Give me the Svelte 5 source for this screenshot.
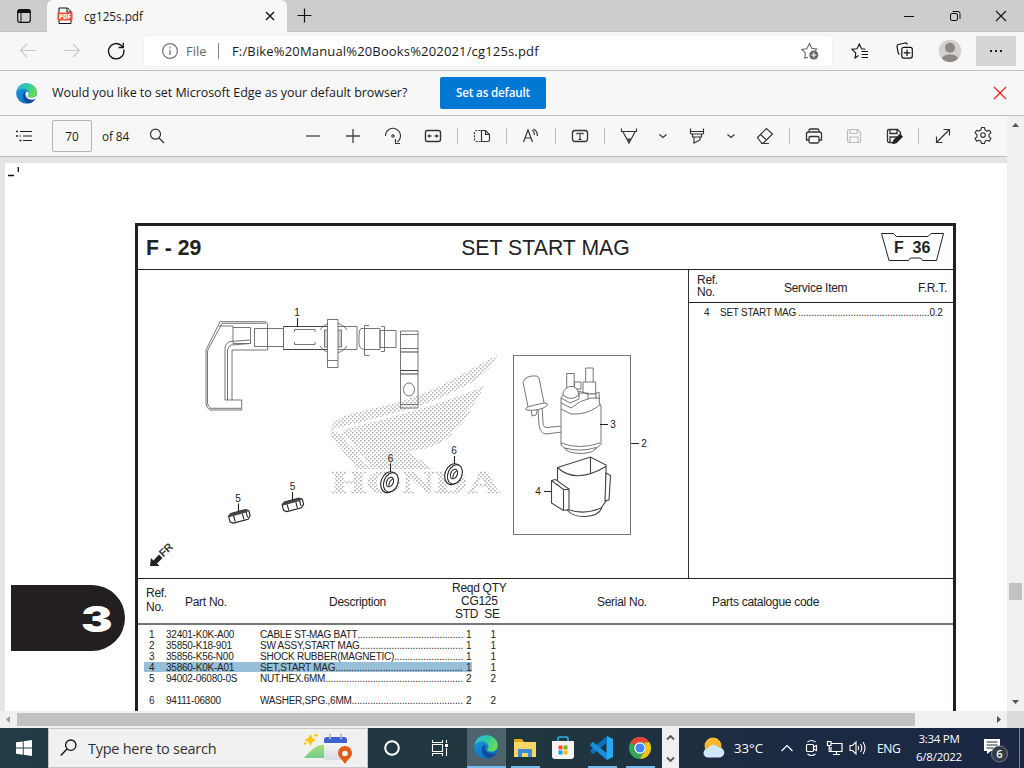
<script>
  const items = [
    ['1', '32401-K0K-A00', 'CABLE ST-MAG BATT', 40, '1', '1'],
    ['2', '35850-K18-901', 'SW ASSY,START MAG', 39, '1', '1'],
    ['3', '35856-K56-N00', 'SHOCK RUBBER(MAGNETIC)', 26, '1', '1'],
    ['4', '35860-K0K-A01', 'SET,START MAG', 48, '1', '1'],
    ['5', '94002-06080-0S', 'NUT.HEX.6MM', 52, '2', '2'],
    null,
    ['6', '94111-06800', 'WASHER,SPG.,6MM', 42, '2', '2']
  ];
  const nuts = [[239, 516.5], [292.5, 505]];
  const washers = [[390, 482], [454, 474]];
</script>

{#snippet edge(size, id)}
  <svg width={size} height={size} viewBox="0 0 24 24">
    <defs>
      <linearGradient id={id + 'a'} x1="0" y1="0" x2="1" y2="0.5"><stop offset="0" stop-color="#28b5e4" /><stop offset="0.55" stop-color="#36c9a0" /><stop offset="1" stop-color="#65dc59" /></linearGradient>
      <linearGradient id={id + 'b'} x1="0" y1="0" x2="0.7" y2="1"><stop offset="0" stop-color="#1b9de2" /><stop offset="1" stop-color="#0b6bc4" /></linearGradient>
    </defs>
    <circle cx="12" cy="12" r="11.8" fill="url(#{id}b)" />
    <path d="M.6 10C1.5 3.6 6.2.2 12 .2c7 0 11.8 4.900 11.800 10.200 0 3.800-2.900 6.200-6.400 6.200-2.600 0-4.200-.8-4.200-1.600 0-.7 1.300-1.300 1.300-3.300 0-2.900-2.800-5.200-6.300-5.200C5 6.500 2.100 7.800.6 10z" fill="url(#{id}a)" />
    <path d="M8.200 12.500c-1.800 5.300 2.400 10.600 7.600 10.600 3-.8 5.200-2.600 6.700-5.100-5.500 2.400-12.200-.2-11.700-5.900.1-1 .7-1.800 1.400-2.200-1.800-.2-3.300.8-4 2.600z" fill="#134a94" />
    <path d="M14.500 11.700c0 2-1.300 2.600-1.300 3.300 0 .8 1.600 1.600 4.200 1.600 2.300 0 4.600-1 5.800-3l-.6 4.300c-5.400 3-12.400.2-11.800-5.800.1-1 .7-1.800 1.400-2.200 1.200 0 2.200.6 2.300 1.800z" fill="#f7f7f7" opacity={size < 22 ? 1 : 0} />
  </svg>
{/snippet}

<div class="screen">
  <header class="tabs">
    <div class="tab-actions">
      <svg width="16" height="16" viewBox="0 0 16 16"><rect x="1.700" y="1.700" width="12.600" height="12.600" rx="2" fill="none" stroke="#111" stroke-width="1.200" /><path d="M1.500 5V3.500a2 2 0 0 1 2-2h9a2 2 0 0 1 2 2V5z" fill="#111" /><path d="M5 5v9" stroke="#111" /></svg>
    </div>
    <div class="tab">
      <svg width="16" height="18" viewBox="0 0 16 18"><path d="M2 1h8.500L14 4.500V16.500H2z" fill="#fff" stroke="#111" /><path d="M10 1v4h4" fill="none" stroke="#111" /><rect x=".5" y="5.500" width="15" height="8" fill="#f44" /><text x="8" y="12" text-anchor="middle" font-size="6.500" font-weight="800" fill="#fff" textLength="12" lengthAdjust="spacingAndGlyphs">PDF</text></svg>
      <span class="tab-title">cg125s.pdf</span>
      <svg class="tab-close" width="10" height="10" viewBox="0 0 10 10"><path d="M1 1l8 8M9 1L1 9" stroke="#111" stroke-width="1.400" /></svg>
    </div>
    <svg class="new-tab" width="15" height="15" viewBox="0 0 15 15"><path d="M7.500.5v14M.5 7.500h14" stroke="#111" stroke-width="1.200" /></svg>
    <div class="window-controls">
      <svg width="46" height="31" viewBox="0 0 46 31"><path d="M18 16.500h10" stroke="#111" /></svg>
      <svg width="46" height="31" viewBox="0 0 46 31" fill="none" stroke="#111"><rect x="18.500" y="13.500" width="7" height="7" rx="1.500" /><path d="M20.500 11.500h5.500a2 2 0 0 1 2 2V19" /></svg>
      <svg width="46" height="31" viewBox="0 0 46 31"><path d="M18 11l10 10M28 11L18 21" stroke="#111" stroke-width="1.100" /></svg>
    </div>
  </header>

  <nav class="address">
    <svg class="back" width="18" height="16" viewBox="0 0 18 16"><path d="M8 1L1.500 7.500 8 14M1.500 7.500H17" fill="none" stroke="#c9c9c9" stroke-width="1.100" /></svg>
    <svg class="forward" width="18" height="16" viewBox="0 0 18 16"><path d="M10 1l6.500 6.500L10 14M16.500 7.500H1" fill="none" stroke="#c9c9c9" stroke-width="1.100" /></svg>
    <svg class="reload" width="18" height="18" viewBox="0 0 18 18"><path d="M16.700 7.500A7.700 7.700 0 1 1 14 3.200l2 2M16.300.8v4.700h-4.700" fill="none" stroke="#111" stroke-width="1.300" /></svg>
    <div class="url">
      <svg width="16" height="16" viewBox="0 0 16 16"><circle cx="8" cy="8" r="7.400" fill="none" stroke="#777" stroke-width="1.200" /><path d="M8 7v5M8 4v1.500" stroke="#777" stroke-width="1.300" /></svg>
      <span class="scheme">File</span><i></i><span class="path">F:/Bike%20Manual%20Books%202021/cg125s.pdf</span>
      <svg class="fav" width="18" height="18" viewBox="0 0 18 18"><path d="M7 15.200l-3.200 1 .6-5L1 7.500l4.800-.8L8.500 1.500l2.300 4.800 5 .9-1.500 1.500" fill="none" stroke="#666" stroke-width="1.100" /><circle cx="12.800" cy="13" r="4.500" fill="#666" /><path d="M10.300 13h5M12.800 10.500v5" stroke="#fff" stroke-width="1.100" /></svg>
    </div>
    <svg class="a-star" width="18" height="17" viewBox="0 0 18 17"><path d="M7.500 12.500L4 15l.8-5L1 6.300l5-.6L8.300 1l2.200 4.700 4 .6M10.500 8.500H17M10.500 11.500H17M10.500 14.500H17" fill="none" stroke="#111" stroke-width="1.100" /></svg>
    <svg class="a-coll" width="18" height="18" viewBox="0 0 18 18" fill="none" stroke="#111" stroke-width="1.200"><path d="M3.500 12.500C1.500 11.500 2 9.500 1.500 7L1 4.500a2 2 0 0 1 1.500-2L9 1a2 2 0 0 1 2.300 1.500" /><rect x="5.800" y="5.300" width="10.500" height="10.800" rx="2" /><path d="M11 7.500v6.500M7.800 10.800h6.500" /></svg>
    <svg class="a-user" width="24" height="24" viewBox="0 0 24 24"><circle cx="12" cy="12" r="11.300" fill="#d3d1cf" /><circle cx="12" cy="8.800" r="5" fill="#8d8885" /><path d="M4 19.500C5 14 19 14 20 19.500a11 11 0 0 1-16 0z" fill="#8d8885" /></svg>
    <div class="more"><b></b><b></b><b></b></div>
  </nav>

  <section class="banner">
    {@render edge(21, 'small')}
    <span class="ask">Would you like to set Microsoft Edge as your default browser?</span>
    <button>Set as default</button>
    <svg class="dismiss" width="14" height="14" viewBox="0 0 14 14"><path d="M1 1l12 12M13 1L1 13" stroke="#f01818" stroke-width="1.100" /></svg>
  </section>

  <div class="work">
    <div class="viewer">
      <div class="toolbar">
        <svg class="toc" width="18" height="14" viewBox="0 0 18 14"><path d="M5 2.500h12M8 7h9M8 11.500h9" stroke="#222" stroke-width="1.200" /><path d="M1 2.500h2M1 7h2M4.500 7h1M4.500 11.500h2" stroke="#222" stroke-width="1.600" /></svg>
        <div class="page-input">70</div>
        <span class="of">of 84</span>
        <svg class="find" width="16" height="16" viewBox="0 0 16 16"><circle cx="6.500" cy="6.200" r="5" fill="none" stroke="#333" stroke-width="1.200" /><path d="M10 10l5 5" stroke="#333" stroke-width="1.300" /></svg>
        <div class="tools">
          <svg viewBox="0 0 40 40"><path d="M13 20h14" stroke="#444" stroke-width="1.300" /></svg>
          <svg viewBox="0 0 40 40"><path d="M13 20h14M20 13v14" stroke="#444" stroke-width="1.300" /></svg>
          <svg viewBox="0 0 40 40"><path d="M12.500 20a7.500 7.500 0 1 1 11.800 6M27 27.500h-4.500V23" /><circle cx="20" cy="20" r="1.200" /></svg>
          <svg viewBox="0 0 40 40"><rect x="12.500" y="14.500" width="15" height="11" rx="2" stroke-width="1.400" /><path d="M14.800 20h4M21.200 20h4" /><path d="M14.500 20l2.500-2v4zM25.500 20L23 18v4z" fill="#333" stroke="none" /></svg>
          <i></i>
          <svg viewBox="0 0 40 40"><path d="M18.500 14.500h-4a2 2 0 0 0-2 2v7a2 2 0 0 0 2 2h4" stroke-dasharray="2 1.200" /><path d="M19.500 14.500h4l4 4v5.500a1.500 1.500 0 0 1-1.500 1.500h-6.500zM23.500 14.500v4h4" /></svg>
          <i></i>
          <svg viewBox="0 0 40 40"><path d="M12.500 26l4.500-12 4.500 12M14 22h6M21 14c2 1 2.500 3 2.200 5M22.500 13c3 1.500 4 4 3.800 7" /></svg>
          <i></i>
          <svg viewBox="0 0 40 40"><rect x="12.500" y="14.500" width="15" height="11" rx="2.500" stroke-width="1.300" /><path d="M17 18.500v-1.300h6v1.300M20 17v6.500M18.500 23.500h3" /></svg>
          <i></i>
          <svg viewBox="0 0 40 40"><path d="M12.500 12.500v3h15v-3M14 16l6 11 6-11" /><path d="M17.500 22.500h5L20 27.500z" fill="#444" stroke="none" /></svg>
          <svg class="chev" viewBox="0 0 28 40"><path d="M10.500 18.500l3.500 3 3.500-3" /></svg>
          <svg viewBox="0 0 40 40"><path d="M13.500 12.500V17a1 1 0 0 0 1 1h11a1 1 0 0 0 1-1v-4.500M13.500 15.500h13M15.500 18v3h9V18M17 21v6l6-3V21" /></svg>
          <svg class="chev" viewBox="0 0 28 40"><path d="M10.500 18.500l3.500 3 3.500-3" /></svg>
          <svg viewBox="0 0 40 40"><path d="M12.500 21.500l9-9 6 5.500-9 9h-2zM15.500 18.500l6 5.500M16 27.500h8" /></svg>
          <i></i>
          <svg viewBox="0 0 40 40"><path d="M15 16v-1.500a1.500 1.500 0 0 1 1.500-1.500h7a1.500 1.500 0 0 1 1.500 1.500V16M15 24h-2.500v-6a2 2 0 0 1 2-2h11a2 2 0 0 1 2 2v6H25" stroke-width="1.300" /><rect x="15" y="20.500" width="10" height="6.500" rx="1.500" stroke-width="1.300" /></svg>
          <svg class="off" viewBox="0 0 40 40"><path d="M15 13.500h8.500l3 3V25a1.500 1.500 0 0 1-1.500 1.500H15a1.500 1.500 0 0 1-1.500-1.500V15a1.500 1.500 0 0 1 1.500-1.500zM16 13.500v4h7v-4M16 26.500V21h8v5.500" /></svg>
          <svg viewBox="0 0 40 40"><path d="M19 26.500h-4a1.500 1.500 0 0 1-1.500-1.500V15a1.500 1.500 0 0 1 1.500-1.500h8.500l3 3V19M16 13.500v4h7v-4M16 26.500V21h7" stroke-width="1.300" /><path d="M19 27.500l1-3.500 6-5.500 2.200 2.200-6 6z" fill="#222" stroke="#222" /></svg>
          <i></i>
          <svg viewBox="0 0 40 40"><path d="M13.500 26.500l13-13M20.500 13.500h6v6M13.500 20.500v6h6" /></svg>
          <svg viewBox="0 0 40 40"><circle cx="20" cy="19" r="2.300" /><path d="M18.500 11.500h3l.6 2.600 1.700 1 2.600-.8 1.500 2.600-1.900 1.800v2l1.900 1.800-1.500 2.600-2.600-.8-1.700 1-.6 2.200h-3l-.6-2.200-1.700-1-2.600.8-1.500-2.600 1.900-1.800v-2l-1.900-1.800 1.500-2.600 2.600.8 1.700-1z" stroke-linejoin="round" /></svg>
        </div>
      </div>

      <div class="canvas">
        <div class="page">
          <svg class="crop" width="14" height="16" viewBox="0 0 14 16"><path d="M3 12.500h6M13.300 4v5" stroke="#111" stroke-width="1.300" /></svg>
          <div class="chapter"><span>3</span></div>
          <div class="sheet">
            <div class="sheet-head">
              <strong>F - 29</strong>
              <span class="name">SET START MAG</span>
              <svg width="64" height="30" viewBox="881 233 64 30"><path d="M881.500 233.500h12l3 3h31.500l3-3h12.500l-7 27h-14l-2-2.500h-10l-2 2.500h-19.500z" fill="#fff" stroke="#222" /><text x="894" y="253" font-family="Liberation Sans, sans-serif" font-weight="700" font-size="16" fill="#222">F</text><text x="912.500" y="253" font-family="Liberation Sans, sans-serif" font-weight="700" font-size="16" fill="#222">36</text></svg>
            </div>
            <div class="figure-row">
              <svg class="figure" width="550" height="308" viewBox="138 270 550 308" fill="none" stroke="#666" stroke-width=".9">
                <defs><pattern id="dots" width="4" height="4" patternUnits="userSpaceOnUse"><path d="M0 0h1.600v1.600H0zM2 2h1.600v1.600H2z" fill="#b4b4b4" stroke="none" /></pattern></defs>
                <g fill="url(#dots)" stroke="none">
                  <path d="M497.500 355L440 386c-30 14-52 19-82 26-17 4-27 9-27 18l14-4c45-11 80-20 108-34 24-11 38-22 44.500-37z" />
                  <path d="M484 386c-44 19-94 32-139 43l-4 5 9 11c40-9 80-15 105-26 14-7 23-18 29-33z" />
                  <path d="M471 411c-41 15-81 23-121 35l9 11c34-9 66-13 88-22 12-7 19-15 24-24z" />
                  <path d="M453 433c-33 9-60 15-93 25l8 11h65l-26-18c18 0 38-8 46-18z" />
                  <path d="M331 429l10 6 27 34h-11l-26-32z" />
                  <text x="331" y="493" font-family="Liberation Serif, serif" font-weight="700" font-size="30.500" textLength="169" lengthAdjust="spacingAndGlyphs" stroke="url(#dots)" stroke-width="1">HONDA</text>
                </g>
                <path d="M343 433l28 36" stroke="#fff" stroke-width="2" />
                <g fill="none">
                  <path d="M220 321.700h46l1.500 2V350H232v50h9.700v10H210q-4-2-4-7v-53l14-28.300" />
                  <path d="M222 323.300h44M241 408.300h-31M222 323.500l-14.500 27V403q.5 4 3 5M219 326h14v17.500h17.500v-16H233M225 400v-52q1-6 6-6.500l19-1.500M227.500 400v-50q1-4.500 4-5l19-1.500M225 400h7" />
                  <path d="M254.500 328.500h29v18h-29zM283.500 326.500H357v23h-73.500z" /><path d="M294.500 332v-2.500H315v2.500M294.500 342v2.500H315v-2.500" />
                  <path d="M283.500 326.500h44M283.500 349.500h44" stroke="#444" stroke-width="1.200" />
                  <path d="M320 330a16 16 0 0 1 27 0M320 346a16 16 0 0 0 27 0" /><path d="M324.500 330h4v17h-4zM337.500 330h4v17h-4z" fill="#aaa" fill-opacity=".5" />
                  <path d="M327.500 319.500h10.500v48h-10.500zM327.500 360.500h10.500" fill="#fff" />
                  <path d="M361 328.500h19v21h-16q-5-1-5-6v-9q0-4 2-6zM369 325.500h-4.500v30h5M380 330.500h16v17h-16zM381 326.500h3.500v25H381" />
                  <path d="M400.500 331h17.500v77h-17.500zM400.500 334.500H418M400.500 348.500H418M400.500 404.500H418" /><path d="M400.500 352H418M400.500 370.500H418M400.500 374H418" stroke="#444" stroke-width="1.200" /><ellipse cx="409" cy="389.500" rx="5.500" ry="6.500" />
                </g>
                <rect x="513.500" y="355.500" width="117" height="179" />
                <g fill="#fff" stroke="#666">
                  <path d="M538 408l1 17q1 8 7 9l16-2v-6l-15 1.500q-4 0-4-5l-1-17" /><path d="M531 407l1 9 4-1 2-8" />
                  <path d="M523 382q3-7 14-6l2 2 5.500 27q-5 4-16 4z" /><path d="M526 410q-1-3 5-4l13-3q4 0 3.500 2-2 3-9 4.500t-12.500.5z" />
                  <path d="M566.700 373.500h7.500V388h-7.500zM585.700 368h7.500v16h-7.500zM574.500 382h6.500v7h-6.500z" />
                  <path d="M583 382h12.700v12H583z" />
                  <path d="M561 445v-47l3-4h9l6-3 8 3h8l4-2 .5 12 1.500 2v38l-4 4q-16 7-33 0z" />
                  <path d="M563 395q0-7 7-8.500t9 8.500q-8 7-16 0z" /><path d="M561 409l10 5q15 1 26-7l4-3M561 403l10 5q9-8 20-10h9M561 398l9 5 9-4V393h9v6M596 393v6" fill="none" />
                  <path d="M561 443q18 7 39 0" fill="none" /><path d="M565 448q1 5 16 5.500 14-.5 15-6-16 5-31 .5z" />
                </g>
                <g fill="#fff" stroke="#444" stroke-width="1.100">
                  <path d="M567 510q6 7 18 6.500 14-.5 17-9" />
                  <path d="M557.500 467.500l33-10.500 15.500 8v36l-5 7q-16 7-32 2l-11.500-10z" />
                  <path d="M557.500 467.500q18 17 48.500-1M590.500 457v17" fill="none" />
                  <path d="M551.500 480.500l4-1 13.500 9.500v20.500l-5.500 1-12-7.500zM563.500 489.500v20.500M552 481l11.500 8.500h5" />
                  <path d="M606 473l4.500 2.500L609 500l-4 .5z" />
                </g>
                <g stroke="#222" stroke-width="1.100">
                  {#each nuts as [x, y]}
                    <g transform="translate({x} {y}) rotate(-15)"><path d="M-10-3l3-2H8l3 2v5l-3 3H-7l-3-2z" fill="#fff" /><path d="M-5-2v6M4-2v6M8-3v6" /><path d="M-10-2.500l3-2.500H8l3 2-3 1H-9z" fill="#444" stroke="none" /></g>
                  {/each}
                  {#each washers as [x, y]}
                    <g transform="translate({x} {y}) rotate(22)"><ellipse rx="8" ry="10.800" cx="-.8" cy=".5" fill="#fff" /><ellipse rx="7" ry="10" cx="1" fill="#fff" /><ellipse rx="3.300" ry="5" /><path d="M1.500-4q-3 4-1 8" /></g>
                  {/each}
                  <path d="M297.500 318v8.500M238.500 503.500v8M292.500 492v8M390.500 463.500v8M454.500 456v8M600 424.500h8M631 443.500h8M544 491.500h8" />
                </g>
                <g font-family="Liberation Sans, sans-serif" font-size="10" fill="#222" stroke="none" text-anchor="middle">
                  <text x="297" y="316">1</text><text x="238" y="502">5</text><text x="292.500" y="490">5</text><text x="390.500" y="462">6</text><text x="454" y="454">6</text><text x="613" y="428">3</text><text x="644" y="447">2</text><text x="538" y="495">4</text>
                  <text font-size="10.500" transform="translate(167 551) rotate(-43)" y="2" stroke="#222" stroke-width=".3">FR</text>
                </g>
                <path d="M150 566l1-8 2.500 2.500 5.500-6 3.500 3.500-5.500 5.500 2.500 2.500z" fill="#222" stroke="none" />
              </svg>
              <div class="service">
                <div class="service-head"><span class="ref">Ref.<br />No.</span><span>Service Item</span><span>F.R.T.</span></div>
                <div class="service-item"><span>4</span><span>SET START MAG</span><span>{'.'.repeat(50)}</span><span>0.2</span></div>
              </div>
            </div>
            <div class="parts-head">
              <span class="ref">Ref.<br />No.</span><span class="h-part">Part No.</span><span class="h-desc">Description</span>
              <span class="h-qty"><span>Reqd QTY</span><span class="cg">CG125</span><span class="std">STD&nbsp; SE</span></span>
              <span class="h-ser">Serial No.</span><span class="h-cat">Parts catalogue code</span>
            </div>
            <div class="parts">
              {#each items as it}
                {#if it}
                  <div class="part">
                    <div class="part-main" class:selected={it[0] === '4'}><span>{it[0]}</span><span>{it[1]}</span><span class="desc">{it[2]}<span class="dots">{'.'.repeat(it[3])}</span></span><span class="q">{it[4]}</span></div>
                    <span class="se">{it[5]}</span>
                  </div>
                {:else}<div class="part"></div>{/if}
              {/each}
            </div>
          </div>
        </div>
      </div>
    </div>
    <div class="vscroll"><svg width="17" height="17" viewBox="0 0 17 17"><path d="M5 11l3.500-4 3.500 4z" fill="#555" /></svg><div class="vthumb"></div><svg class="down" width="17" height="17" viewBox="0 0 17 17"><path d="M5 6l3.500 4L12 6z" fill="#555" /></svg></div>
  </div>
  <div class="hscroll"><svg width="17" height="17" viewBox="0 0 17 17"><path d="M10 5L6 8.500l4 3.500z" fill="#999" /></svg><div class="hthumb"></div><svg class="hright" width="17" height="17" viewBox="0 0 17 17"><path d="M7 5l4 3.500L7 12z" fill="#555" /></svg><div class="corner"></div></div>

  <footer class="taskbar">
    <div class="start"><svg width="16" height="16" viewBox="0 0 16 16"><path d="M0 2.300L6.800 1.400v6.200H0zM7.700 1.200L16 0v7.600H7.700zM0 8.500h6.800v6.200L0 13.800zM7.700 8.500H16V16l-8.300-1.200z" fill="#fff" /></svg></div>
    <div class="search">
      <svg width="17" height="18" viewBox="0 0 17 18"><circle cx="10.800" cy="6.200" r="5.200" fill="none" stroke="#111" stroke-width="1.300" /><path d="M7 10L.8 16.500" stroke="#111" stroke-width="1.300" /></svg>
      <span>Type here to search</span>
      <svg width="50" height="32" viewBox="303 732 50 32">
        <defs><linearGradient id="hill" x1="0" y1="0" x2="0" y2="1"><stop offset="0" stop-color="#a6dd70" /><stop offset="1" stop-color="#71cd91" /></linearGradient><linearGradient id="cal" x1="0" y1="0" x2="0" y2="1"><stop offset="0" stop-color="#fff" /><stop offset="1" stop-color="#d8dadd" /></linearGradient></defs>
        <path d="M304 758q12-15 21-13v13z" fill="url(#hill)" /><rect x="324" y="737" width="23" height="23" rx="3" fill="url(#cal)" /><path d="M324 743v-3q0-3 3-3h17q3 0 3 3v3z" fill="#3d62d1" /><path d="M330 734.500v4M341 734.500v4" stroke="#b7bac1" stroke-width="1.800" stroke-linecap="round" />
        <path d="M310.500 734l2 4 3.500 2-3.500 2-2 4-2-4-4-2 4-2zM316 733l.8 1.600 1.600.8-1.600.8-.8 1.600-.8-1.600-1.600-.8 1.600-.8zM305 741.500l.7 1.300 1.300.7-1.300.7-.7 1.300-.7-1.300-1.300-.7 1.300-.7z" fill="#fdc60b" />
        <path d="M345 764c-3-5-7-7-7-11a7 7 0 0 1 14 0c0 4-4 6-7 11z" fill="#e25a13" /><circle cx="345" cy="753.500" r="2.800" fill="#fff" />
      </svg>
    </div>
    <div class="sys"><svg width="18" height="18" viewBox="0 0 18 18"><circle cx="9" cy="9" r="6.800" fill="none" stroke="#fff" stroke-width="2" /></svg></div>
    <div class="sys"><svg width="18" height="18" viewBox="0 0 18 18" fill="none" stroke="#fff" stroke-width="1.100"><path d="M1.500 1v2.500h10V1M1.500 17v-2.500h10V17M1.500 5.500h10v7h-10zM15.500 1v3M15.500 9v8" /><path d="M15.500 5v3" stroke-width="3" /></svg></div>
    <div class="apps">
      <div class="app active">{@render edge(24, 'large')}</div>
      <div class="app run"><svg width="24" height="24" viewBox="0 0 24 24"><path d="M1 3h8l2 3h12v15H1z" fill="#e9a80e" /><path d="M1 6h22v15H1z" fill="#ffd667" /><path d="M5 21v-8h14v8h-4v-4H9v4z" fill="#3c8dd8" /></svg></div>
      <div class="app"><svg width="24" height="24" viewBox="0 0 24 24"><path d="M7 5V2.500Q7 1 8.500 1h7Q17 1 17 2.500V5" fill="none" stroke="#2bb4e8" stroke-width="1.600" /><path d="M1 5h22v15q0 3-3 3H4q-3 0-3-3z" fill="#f3f3f3" /><path d="M7.500 9.500h4v4h-4z" fill="#f25022" /><path d="M12.500 9.500h4v4h-4z" fill="#7fba00" /><path d="M7.500 14.500h4v4h-4z" fill="#00a4ef" /><path d="M12.500 14.500h4v4h-4z" fill="#ffb900" /></svg></div>
      <div class="app run"><svg width="24" height="24" viewBox="0 0 24 24"><path d="M17 0l6 3v18l-6 3-.5-7V7z" fill="#2aa7f2" /><path d="M17 0v6.500L3 18.200.5 16v-2z" fill="#0b72b8" /><path d="M17 24v-6.500L3 5.800.5 8v2z" fill="#1a8fdc" /></svg></div>
      <div class="app run"><svg width="24" height="24" viewBox="0 0 24 24"><circle cx="12" cy="12" r="11" fill="#34a853" /><path d="M12 1a11 11 0 0 1 9.500 5.500H12A5.500 5.500 0 0 0 7 9.800L2.500 6.500A11 11 0 0 1 12 1z" fill="#ea4335" /><path d="M21.500 6.500A11 11 0 0 1 12 23l5-8.500q2-4-1-8z" fill="#fbc116" /><circle cx="12" cy="12" r="5.700" fill="#fff" /><circle cx="12" cy="12" r="4.500" fill="#4285f4" /></svg></div>
    </div>
    <div class="pager"><svg width="17" height="40" viewBox="0 0 17 40" fill="none" stroke="#555" stroke-width="1.800"><path d="M5 11.500L8.500 8l3.500 3.500M5 29.500L8.500 33l3.500-3.500" /></svg></div>
    <svg class="weather" width="22" height="22" viewBox="0 0 22 22"><circle cx="10" cy="9" r="8.500" fill="#fbb92f" /><path d="M5 20.500a4.500 4.500 0 0 1 0-9 6 6 0 0 1 10.500-1A5 5 0 0 1 17 20.500z" fill="#cfe8fb" /></svg>
    <span class="temp">33°C</span>
    <svg class="up" width="14" height="9" viewBox="0 0 14 9"><path d="M1.500 7L7 1.500 12.500 7" fill="none" stroke="#fff" stroke-width="1.200" /></svg>
    <svg class="meet" width="13" height="18" viewBox="0 0 13 18" fill="none" stroke="#fff" stroke-width="1.200"><rect x="1.500" y="5.500" width="7" height="7" rx="1" /><path d="M8.500 8l3-1.500v5l-3-1.500M2.500 3q4-3 8 0M2.500 15q4 3 8 0" /></svg>
    <svg class="net" width="17" height="16" viewBox="0 0 17 16" fill="none" stroke="#fff" stroke-width="1.200"><path d="M5 3.500h11v8H5V7M10.500 12v2.500M7 14.500h7M1.500 1.500h3.500v4H1.500zM3.200 5.500v6H5" /></svg>
    <svg class="sound" width="18" height="16" viewBox="0 0 18 16" fill="none" stroke="#fff" stroke-width="1.100"><path d="M1 5.500h2.500L7 2v12l-3.500-3.500H1zM9 6q1.200 2 0 4M11.500 4q2.500 4 0 8M14 2q4 6 0 12" /></svg>
    <span class="lang">ENG</span>
    <div class="clock"><span>3:34 PM</span><span>6/8/2022</span></div>
    <svg class="notes" width="26" height="26" viewBox="0 0 26 26"><path d="M1 2h16v12H8l-4 3v-3H1z" fill="#fff" /><path d="M3.500 5h11M3.500 8h11M3.500 11h7" stroke="#1c2b40" /><circle cx="16.500" cy="17" r="8" fill="#343b47" stroke="#777d86" /><text x="16.500" y="21" text-anchor="middle" font-size="11" font-weight="600" fill="#fff">6</text></svg>
    <div class="peek"></div>
  </footer>
</div>

<style>
  :global(body) { margin: 0; }
  .screen { width: 1024px; height: 768px; display: flex; flex-direction: column; overflow: hidden; font-family: "Open Sans", "Noto Sans", sans-serif; color: #1a1a1a; background: #f7f7f7; white-space: nowrap; }
  svg { display: block; flex: none; }
  .tabs { box-sizing: border-box; height: 32px; background: #cdcdcd; display: flex; align-items: flex-start; flex: none; border-bottom: 1px solid #c2c2c2; }
  .tab-actions { width: 31px; padding: 8px 0 0 16px; }
  .tab { box-sizing: border-box; width: 240px; height: 32px; background: #f7f7f7; border-radius: 6px 6px 0 0; display: flex; align-items: center; padding-left: 10px; }
  .tab-title { width: 181px; margin-left: 11px; font-size: 11.700px; line-height: 16px; margin-top: -1px; }
  .new-tab { margin: 8px 0 0 10px; }
  .window-controls { display: flex; margin-left: auto; }
  .address { height: 38px; flex: none; display: flex; align-items: center; border-bottom: 1px solid #bcbcbc; }
  .back { margin-left: 19px; }
  .forward { margin-left: 26px; }
  .reload { margin-left: 26px; }
  .url { box-sizing: border-box; width: 688px; height: 30px; margin-left: 19px; padding: 0 13px 0 18px; background: #fff; border-radius: 4px; display: flex; align-items: center; font-size: 13px; box-shadow: 0 0 2px #e2e2e2; }
  .scheme { width: 32px; margin-left: 8px; color: #666; font-size: 13px; }
  .url i { width: 1px; height: 16px; background: #888; }
  .path { margin-left: 13px; letter-spacing: .16px; }
  .fav { margin-left: auto; }
  .a-star { margin-left: 19px; }
  .a-coll { margin-left: 27px; }
  .a-user { margin-left: 24px; }
  .more { width: 40px; height: 30px; margin-left: 14px; background: #d5d5d5; display: flex; align-items: center; justify-content: center; gap: 3px; }
  .more b { width: 2px; height: 2px; background: #222; }
  .banner { height: 44px; flex: none; display: flex; align-items: center; border-bottom: 1px solid #bcbcbc; padding-left: 16px; }
  .ask { width: 388px; margin-left: 15px; font-size: 12.500px; letter-spacing: -.05px; margin-top: -2px; }
  .banner button { width: 106px; height: 32px; padding: 0 0 2px; border: 0; border-radius: 2px; background: #0078d4; color: #fff; font: 600 11.700px "Open Sans", sans-serif; letter-spacing: -.2px; }
  .dismiss { margin-left: auto; margin-right: 17px; }
  .work { height: 595px; flex: none; display: flex; }
  .viewer { width: 1007px; display: flex; flex-direction: column; }
  .toolbar { height: 40px; flex: none; display: flex; align-items: center; border-bottom: 1px solid #bcbcbc; font-size: 11.800px; }
  .toc { margin-left: 15px; }
  .page-input { box-sizing: border-box; width: 40px; height: 32px; line-height: 31px; text-align: center; border: 1px solid #b4b4b4; border-radius: 2px; margin-left: 19px; }
  .of { width: 47px; margin-left: 10px; letter-spacing: -.1px; }
  .tools { display: flex; align-items: center; margin-left: auto; margin-right: 4px; }
  .tools svg { width: 40px; height: 40px; fill: none; stroke: #333; stroke-width: 1.150px; }
  .tools .chev { width: 28px; }
  .tools .off { stroke: #bbb; }
  .tools i { width: 1px; height: 16px; margin: 0 4px; background: #bbb; }
  .canvas { height: 554px; overflow: hidden; background: #e4e4e4; padding: 6px 0 0 5px; box-sizing: border-box; display: flex; }
  .page { width: 1002px; height: 548px; background: #fff; display: grid; grid-template-columns: 130px 821px; grid-template-rows: 60px 362px 66px; font-family: "Liberation Sans", Arial, sans-serif; color: #222; overflow: hidden; }
  .crop { grid-area: 1 / 1; }
  .chapter { grid-area: 3 / 1; width: 114px; height: 66px; margin-left: 6px; background: #231f20; border-radius: 0 33px 33px 0; display: flex; align-items: center; justify-content: flex-end; }
  .chapter span { color: #fff; font: 900 35px/40px Inter, sans-serif; transform: scaleX(1.350); margin: 1px 17px 0 0; }
  .sheet { grid-area: 2 / 2; box-sizing: border-box; width: 821px; height: 520px; border: 3px solid #231f20; }
  .sheet-head { box-sizing: border-box; height: 43px; display: flex; align-items: center; justify-content: space-between; padding: 0 8px 0 8px; font-size: 21.200px; }
  .sheet-head strong { width: 64px; }
  .name { letter-spacing: .05px; margin-right: 0; }
  .figure-row { height: 308px; display: flex; border-top: 1px solid #222; border-bottom: 1px solid #222; }
  .service { flex: 1; border-left: 1px solid #333; }
  .service-head { height: 33px; box-sizing: border-box; border-bottom: 1px solid #222; display: grid; grid-template-columns: 87px 134px auto; padding: 4px 0 0 8px; font-size: 12px; letter-spacing: -.28px; line-height: 12px; align-items: start; }
  .service-head span + span { padding-top: 8px; }
  .service-item { display: flex; font-size: 10px; letter-spacing: -.25px; line-height: 12px; padding: 4px 0 0 15px; }
  .service-item span:nth-child(1) { width: 16px; }
  .service-item span:nth-child(2) { width: 78px; }
  .service-item span:nth-child(3) { letter-spacing: -.15px; }
  .parts-head { height: 44px; border-bottom: 2px solid #777; display: grid; grid-template-columns: 39px 144px 123px 145px 115px auto; padding-left: 8px; font-size: 12px; letter-spacing: -.28px; line-height: 14px; }
  .parts-head .ref { padding-top: 7px; }
  .h-part, .h-desc, .h-ser, .h-cat { padding-top: 16px; }
  .h-qty { display: flex; flex-direction: column; line-height: 13px; padding-top: 3px; }
  .cg { padding-left: 9px; }
  .std { padding-left: 3px; }
  .parts { padding: 4px 0 0 6px; font-size: 10px; letter-spacing: -.24px; line-height: 11px; }
  .dots { letter-spacing: -.13px; }
  .part { display: flex; height: 11px; }
  .part-main { width: 328px; height: 10px; line-height: 11px; display: grid; grid-template-columns: 22px 94px 206px auto; }
  .part-main > span:first-child { padding-left: 5px; }
  .selected { background: #98bfd8; }
  .se { margin-left: 18.500px; }
  .vscroll { width: 17px; background: #f0f0f0; display: flex; flex-direction: column; }
  .vthumb { width: 13px; height: 17px; background: #c1c1c1; margin: 450px 2px 0; }
  .down { margin-top: auto; }
  .hscroll { height: 17px; flex: none; background: #f0f0f0; display: flex; align-items: center; }
  .hthumb { width: 898px; height: 13px; background: #c1c1c1; }
  .hright { margin-left: auto; }
  .corner { width: 17px; height: 17px; background: #dcdcdc; }
  .taskbar { height: 40px; flex: none; display: flex; align-items: center; color: #fff; background: linear-gradient(90deg, #213c44, #20363f 55%, #1c2a42 75%, #1b2743); }
  .start { width: 48px; display: flex; justify-content: center; }
  .search { box-sizing: border-box; width: 320px; height: 40px; background: #f1f1f1; border: 1px solid #c5c5c5; display: flex; align-items: center; padding-left: 11px; color: #333; font-size: 14.500px; }
  .search span { width: 215px; margin-left: 11px; letter-spacing: -.27px; }
  .sys { width: 48px; display: flex; justify-content: center; }
  .apps { display: flex; height: 40px; margin-left: 3px; width: 195px; }
  .app { box-sizing: border-box; width: 38.500px; display: flex; align-items: center; justify-content: center; position: relative; }
  .active { background: #4d636e; border-bottom: 2px solid #76b9ed; }
  .run::after { content: ""; position: absolute; bottom: 0; left: 5px; width: 29px; height: 2px; background: #76b9ed; }
  .pager { width: 17px; background: #f0f0f0; }
  .weather { margin-left: 24px; }
  .temp { width: 36px; margin-left: 9px; font-size: 13.200px; }
  .up { margin-left: 10px; }
  .meet { margin-left: 11px; }
  .net { margin-left: 8px; }
  .sound { margin-left: 6px; }
  .lang { width: 31px; margin-left: 10px; font-size: 12px; letter-spacing: -.3px; }
  .clock { width: 62px; display: flex; flex-direction: column; align-items: center; font-size: 11.500px; line-height: 18px; letter-spacing: -.25px; }
  .notes { margin-left: 13px; margin-top: 3px; }
  .peek { width: 1px; height: 40px; background: #7a8290; margin-left: auto; margin-right: 4px; }
</style>
